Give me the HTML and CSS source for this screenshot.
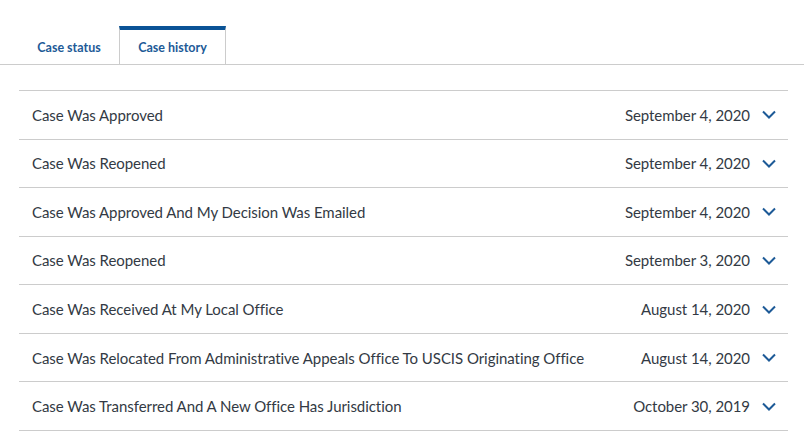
FILE: index.html
```html
<!DOCTYPE html>
<html lang="en">
<head>
<meta charset="utf-8">
<link rel="stylesheet" href="styles.css">
</head>
<body>
<div class="tabs">
  <div class="tab">Case status</div>
  <div class="tab active">Case history</div>
</div>
<ul class="history">
  <li class="row"><span class="title">Case Was Approved</span><span class="date">September 4, 2020</span><svg class="chev" viewBox="0 0 14 9"><path d="M1 1.5 L7 7.5 L13 1.5" /></svg></li>
  <li class="row"><span class="title">Case Was Reopened</span><span class="date">September 4, 2020</span><svg class="chev" viewBox="0 0 14 9"><path d="M1 1.5 L7 7.5 L13 1.5" /></svg></li>
  <li class="row"><span class="title">Case Was Approved And My Decision Was Emailed</span><span class="date">September 4, 2020</span><svg class="chev" viewBox="0 0 14 9"><path d="M1 1.5 L7 7.5 L13 1.5" /></svg></li>
  <li class="row"><span class="title">Case Was Reopened</span><span class="date">September 3, 2020</span><svg class="chev" viewBox="0 0 14 9"><path d="M1 1.5 L7 7.5 L13 1.5" /></svg></li>
  <li class="row"><span class="title">Case Was Received At My Local Office</span><span class="date">August 14, 2020</span><svg class="chev" viewBox="0 0 14 9"><path d="M1 1.5 L7 7.5 L13 1.5" /></svg></li>
  <li class="row"><span class="title">Case Was Relocated From Administrative Appeals Office To USCIS Originating Office</span><span class="date">August 14, 2020</span><svg class="chev" viewBox="0 0 14 9"><path d="M1 1.5 L7 7.5 L13 1.5" /></svg></li>
  <li class="row"><span class="title">Case Was Transferred And A New Office Has Jurisdiction</span><span class="date">October 30, 2019</span><svg class="chev" viewBox="0 0 14 9"><path d="M1 1.5 L7 7.5 L13 1.5" /></svg></li>
</ul>
</body>
</html>
```
FILE: styles.css
```css
html, body {
  margin: 0;
  padding: 0;
  background: #fff;
}
body {
  font-family: "Source Sans Pro", Lato, "Liberation Sans", sans-serif;
  color: #333a44;
}
.tabs {
  display: flex;
  padding: 26px 0 0 19px;
  border-bottom: 1px solid #cccccc;
}
.tab {
  box-sizing: border-box;
  height: 38px;
  width: 100px;
  display: flex;
  align-items: center;
  justify-content: center;
  white-space: nowrap;
  font-size: 12.5px;
  font-weight: 700;
  color: #1d5a97;
  border-top: 4px solid transparent;
}
.tab.active {
  width: 107px;
  border-top-color: #0a5396;
  border-left: 1px solid #cccccc;
  border-right: 1px solid #cccccc;
}
.history {
  list-style: none;
  margin: 25px 16px 0 19px;
  padding: 0;
  border-bottom: 1px solid #cccccc;
}
.row {
  box-sizing: border-box;
  height: 48.57px;
  display: flex;
  align-items: center;
  border-top: 1px solid #cccccc;
  padding: 0 12px 0 13px;
  font-size: 15px;
  letter-spacing: -0.05px;
}
.title { flex: 1; }
.date { margin-right: 12px; }
.chev {
  width: 14px;
  height: 9px;
  fill: none;
  stroke: #1d5a97;
  stroke-width: 2;
}
```
